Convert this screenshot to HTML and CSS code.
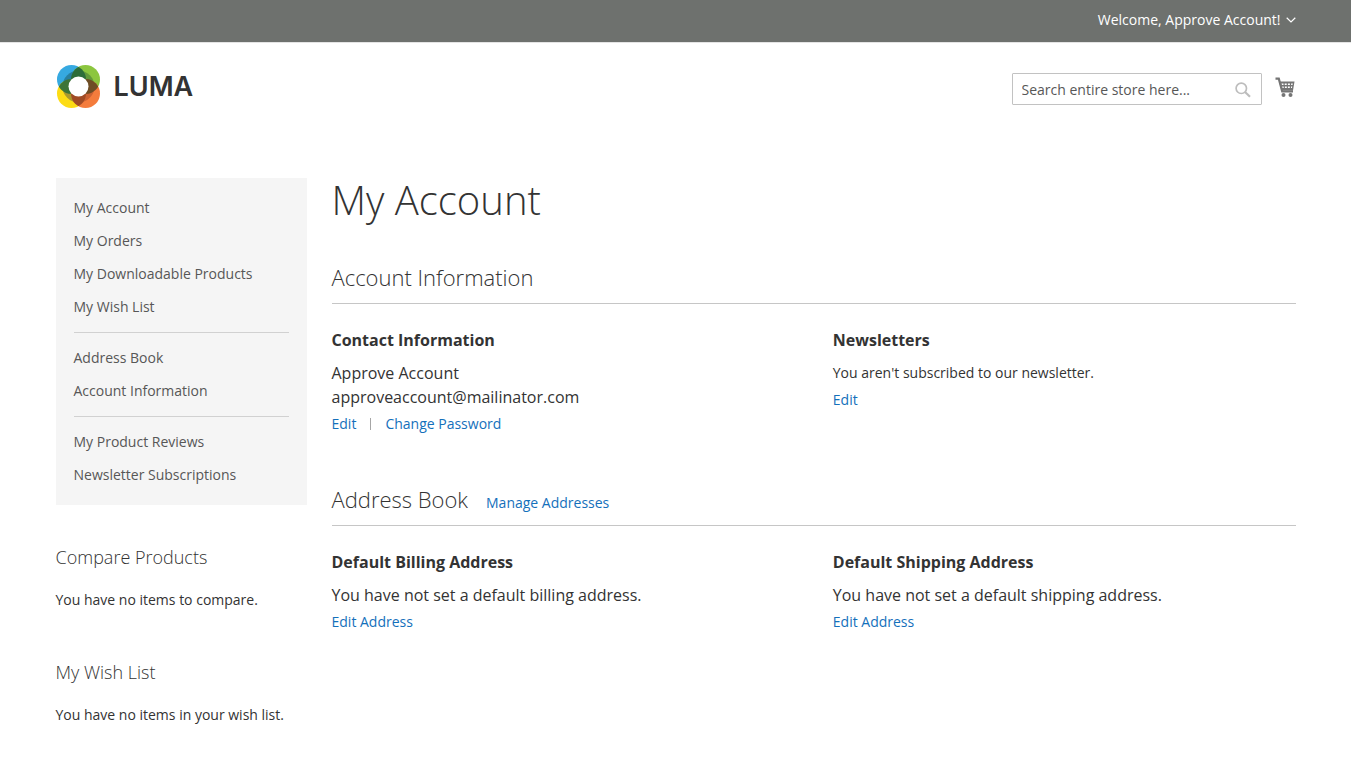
FILE: index.html
```html
<!DOCTYPE html>
<html lang="en">
<head>
<meta charset="utf-8">
<title>My Account</title>
<link rel="stylesheet" href="styles.css">
</head>
<body>
<header>
  <div class="panel">
    <div class="container panel-inner">
      <button class="welcome" type="button">Welcome, Approve Account!
        <svg width="10" height="6" viewBox="0 0 10 6" aria-hidden="true"><path d="M.7 .7 5 4.9 9.3 .7" fill="none" stroke="currentColor" stroke-width="1.2"/></svg>
      </button>
    </div>
  </div>
  <div class="container masthead">
    <a class="logo" href="#" aria-label="Luma">
      <svg width="45" height="45" viewBox="0 0 45 45" aria-hidden="true">
        <defs>
          <clipPath id="tl"><circle cx="15.5" cy="15.5" r="14.5"/></clipPath>
          <clipPath id="bl"><circle cx="15.5" cy="29.5" r="14.5"/></clipPath>
          <clipPath id="tr"><circle cx="29.5" cy="15.5" r="14.5"/></clipPath>
        </defs>
        <circle cx="15.5" cy="15.5" r="14.5" fill="#36a9e1"/>
        <circle cx="29.5" cy="15.5" r="14.5" fill="#8cc63f"/>
        <circle cx="15.5" cy="29.5" r="14.5" fill="#fddc15"/>
        <circle cx="29.5" cy="29.5" r="14.5" fill="#f47c3c"/>
        <path d="M22.5 22.5V6.500A16 16 0 0 0 6.500 22.500z" fill="#287f9e"/>
        <path d="M22.500 22.500V6.500A16 16 0 0 1 38.500 22.500z" fill="#62983a"/>
        <path d="M22.500 22.500V38.500A16 16 0 0 1 6.500 22.500z" fill="#ab982e"/>
        <path d="M22.500 22.500V38.500A16 16 0 0 0 38.500 22.500z" fill="#cc6232"/>
        <circle cx="29.5" cy="15.5" r="14.5" fill="#2d6d3a" clip-path="url(#tl)"/>
        <circle cx="15.5" cy="29.5" r="14.5" fill="#3d7438" clip-path="url(#tl)"/>
        <circle cx="29.5" cy="29.5" r="14.5" fill="#6e4d25" clip-path="url(#tr)"/>
        <circle cx="29.5" cy="29.5" r="14.5" fill="#a04b25" clip-path="url(#bl)"/>
        <circle cx="22.5" cy="22.5" r="10" fill="#fff"/>
      </svg>
      <span class="wordmark">LUMA</span>
    </a>
    <div class="tools">
      <form class="search">
        <input type="text" aria-label="Search" placeholder="Search entire store here...">
        <button type="button" aria-label="Search">
          <svg width="16" height="16" viewBox="0 0 16 16" aria-hidden="true"><g fill="none" stroke="#bdbdbd"><circle cx="6.3" cy="6.3" r="5.2" stroke-width="1.7"/><path d="m10 10 5 4.800" stroke-width="2.200"/></g></svg>
        </button>
      </form>
      <a class="cart" href="#" aria-label="My Cart">
        <svg width="21" height="21" viewBox="0 0 21 21" aria-hidden="true"><path d="M.5 1.700h3.300l3.400 12.600h10.800" fill="none" stroke="#757575" stroke-width="2.200"/><path d="M4 4.500H19.500l-1.500 9H6.500z" fill="#757575"/><path d="M6.500 6.500h2v1.500H7zM9.700 6.500h2v1.500h-2zM12.900 6.500h2v1.500h-2zM16.100 6.500h1.700l-.3 1.500h-1.400zM7.200 9.500h1.500V11H7.600zM9.900 9.500h1.900V11H9.900zM12.900 9.500h1.900V11h-1.900zM16 9.500h1.200L17 11h-1z" fill="#fff"/><circle cx="8.500" cy="18" r="2" fill="#757575"/><circle cx="15.500" cy="18" r="2" fill="#757575"/></svg>
      </a>
    </div>
  </div>
</header>
<div class="container columns">
  <aside>
    <nav class="account-nav" aria-label="Account">
      <ul>
        <li><a href="#">My Account</a></li>
        <li><a href="#">My Orders</a></li>
        <li><a href="#">My Downloadable Products</a></li>
        <li><a href="#">My Wish List</a></li>
      </ul>
      <ul>
        <li><a href="#">Address Book</a></li>
        <li><a href="#">Account Information</a></li>
      </ul>
      <ul>
        <li><a href="#">My Product Reviews</a></li>
        <li><a href="#">Newsletter Subscriptions</a></li>
      </ul>
    </nav>
    <section class="side-block">
      <h2>Compare Products</h2>
      <p>You have no items to compare.</p>
    </section>
    <section class="side-block">
      <h2>My Wish List</h2>
      <p>You have no items in your wish list.</p>
    </section>
  </aside>
  <main>
    <h1>My Account</h1>
    <section class="block">
      <div class="block-title"><h2>Account Information</h2></div>
      <div class="boxes">
        <div>
          <h3>Contact Information</h3>
          <p class="large">Approve Account<br>approveaccount@mailinator.com</p>
          <div class="actions"><a href="#">Edit</a><a href="#">Change Password</a></div>
        </div>
        <div>
          <h3>Newsletters</h3>
          <p>You aren't subscribed to our newsletter.</p>
          <div class="actions"><a href="#">Edit</a></div>
        </div>
      </div>
    </section>
    <section class="block">
      <div class="block-title"><h2>Address Book</h2><a href="#">Manage Addresses</a></div>
      <div class="boxes">
        <div>
          <h3>Default Billing Address</h3>
          <p class="large">You have not set a default billing address.</p>
          <div class="actions"><a href="#">Edit Address</a></div>
        </div>
        <div>
          <h3>Default Shipping Address</h3>
          <p class="large">You have not set a default shipping address.</p>
          <div class="actions"><a href="#">Edit Address</a></div>
        </div>
      </div>
    </section>
  </main>
</div>
</body>
</html>
```
FILE: styles.css
```css
* { box-sizing: border-box; }
body {
  margin: 0;
  background: #fff;
  color: #333;
  font: 14px/20px "Open Sans", "Noto Sans", sans-serif;
}
h1, h2, h3, p, ul { margin: 0; padding: 0; }
h1, h2 { font-weight: 300; }
ul { list-style: none; }
a { color: #1470bb; text-decoration: none; }
svg { display: block; }
button { border: 0; padding: 0; background: none; font: inherit; cursor: pointer; }
.container { max-width: 1280px; margin: 0 auto; padding: 0 20px; }

.panel { background: #6e716e; border-bottom: 1px solid #e4e4e4; }
.panel-inner { display: flex; justify-content: flex-end; padding-top: 10px; padding-bottom: 12px; }
.welcome { display: flex; align-items: center; gap: 5px; color: #fff; }

.masthead { display: flex; justify-content: space-between; padding-top: 21px; }
.logo { display: flex; align-items: center; gap: 13px; color: #333; }
.wordmark { font: 600 27px/32px Inter, sans-serif; }
.tools { display: flex; align-items: flex-start; gap: 13px; padding-top: 9px; }
.search {
  display: flex;
  align-items: center;
  width: 250px;
  height: 32px;
  padding: 1px 10px 0 9px;
  border: 1px solid #c2c2c2;
  border-radius: 1px;
}
.search input { flex: 1; min-width: 0; border: 0; padding: 0; outline: 0; font: inherit; color: #333; background: none; }
.search input::placeholder { color: #575757; opacity: 1; }
.cart { padding-top: 4px; }

.columns { display: grid; grid-template-columns: 251px 1fr; gap: 25px; padding-top: 69px; }
.account-nav { background: #f5f5f5; padding: 15px 18px 12px; }
.account-nav ul + ul { margin-top: 7px; padding-top: 10px; border-top: 1px solid #d1d1d1; }
.account-nav a { display: block; padding: 5px 0 8px; color: #575757; }
.side-block { padding-top: 40px; margin-bottom: 10px; }
.side-block h2 { font-size: 18px; line-height: 25px; margin-bottom: 20px; }

h1 { font-size: 40px; line-height: 44px; margin-bottom: 40px; }
.block { margin-bottom: 50px; }
.block-title {
  display: flex;
  align-items: baseline;
  gap: 18px;
  padding-bottom: 10px;
  margin-bottom: 24px;
  border-bottom: 1px solid #c6c6c6;
}
.block-title h2 { font-size: 22px; line-height: 31px; }
.boxes { display: grid; grid-template-columns: 48% 48%; justify-content: space-between; line-height: 24px; }
h3 { font-size: 16px; line-height: 24px; margin-bottom: 9px; font-weight: 700; }
.large { font-size: 16px; }
.actions { display: flex; margin-top: 5px; line-height: 20px; }
.actions a + a { display: flex; align-items: center; }
.actions a + a::before { content: ""; height: 12px; margin: 0 14px; border-left: 1px solid #a6a6a6; }
```
